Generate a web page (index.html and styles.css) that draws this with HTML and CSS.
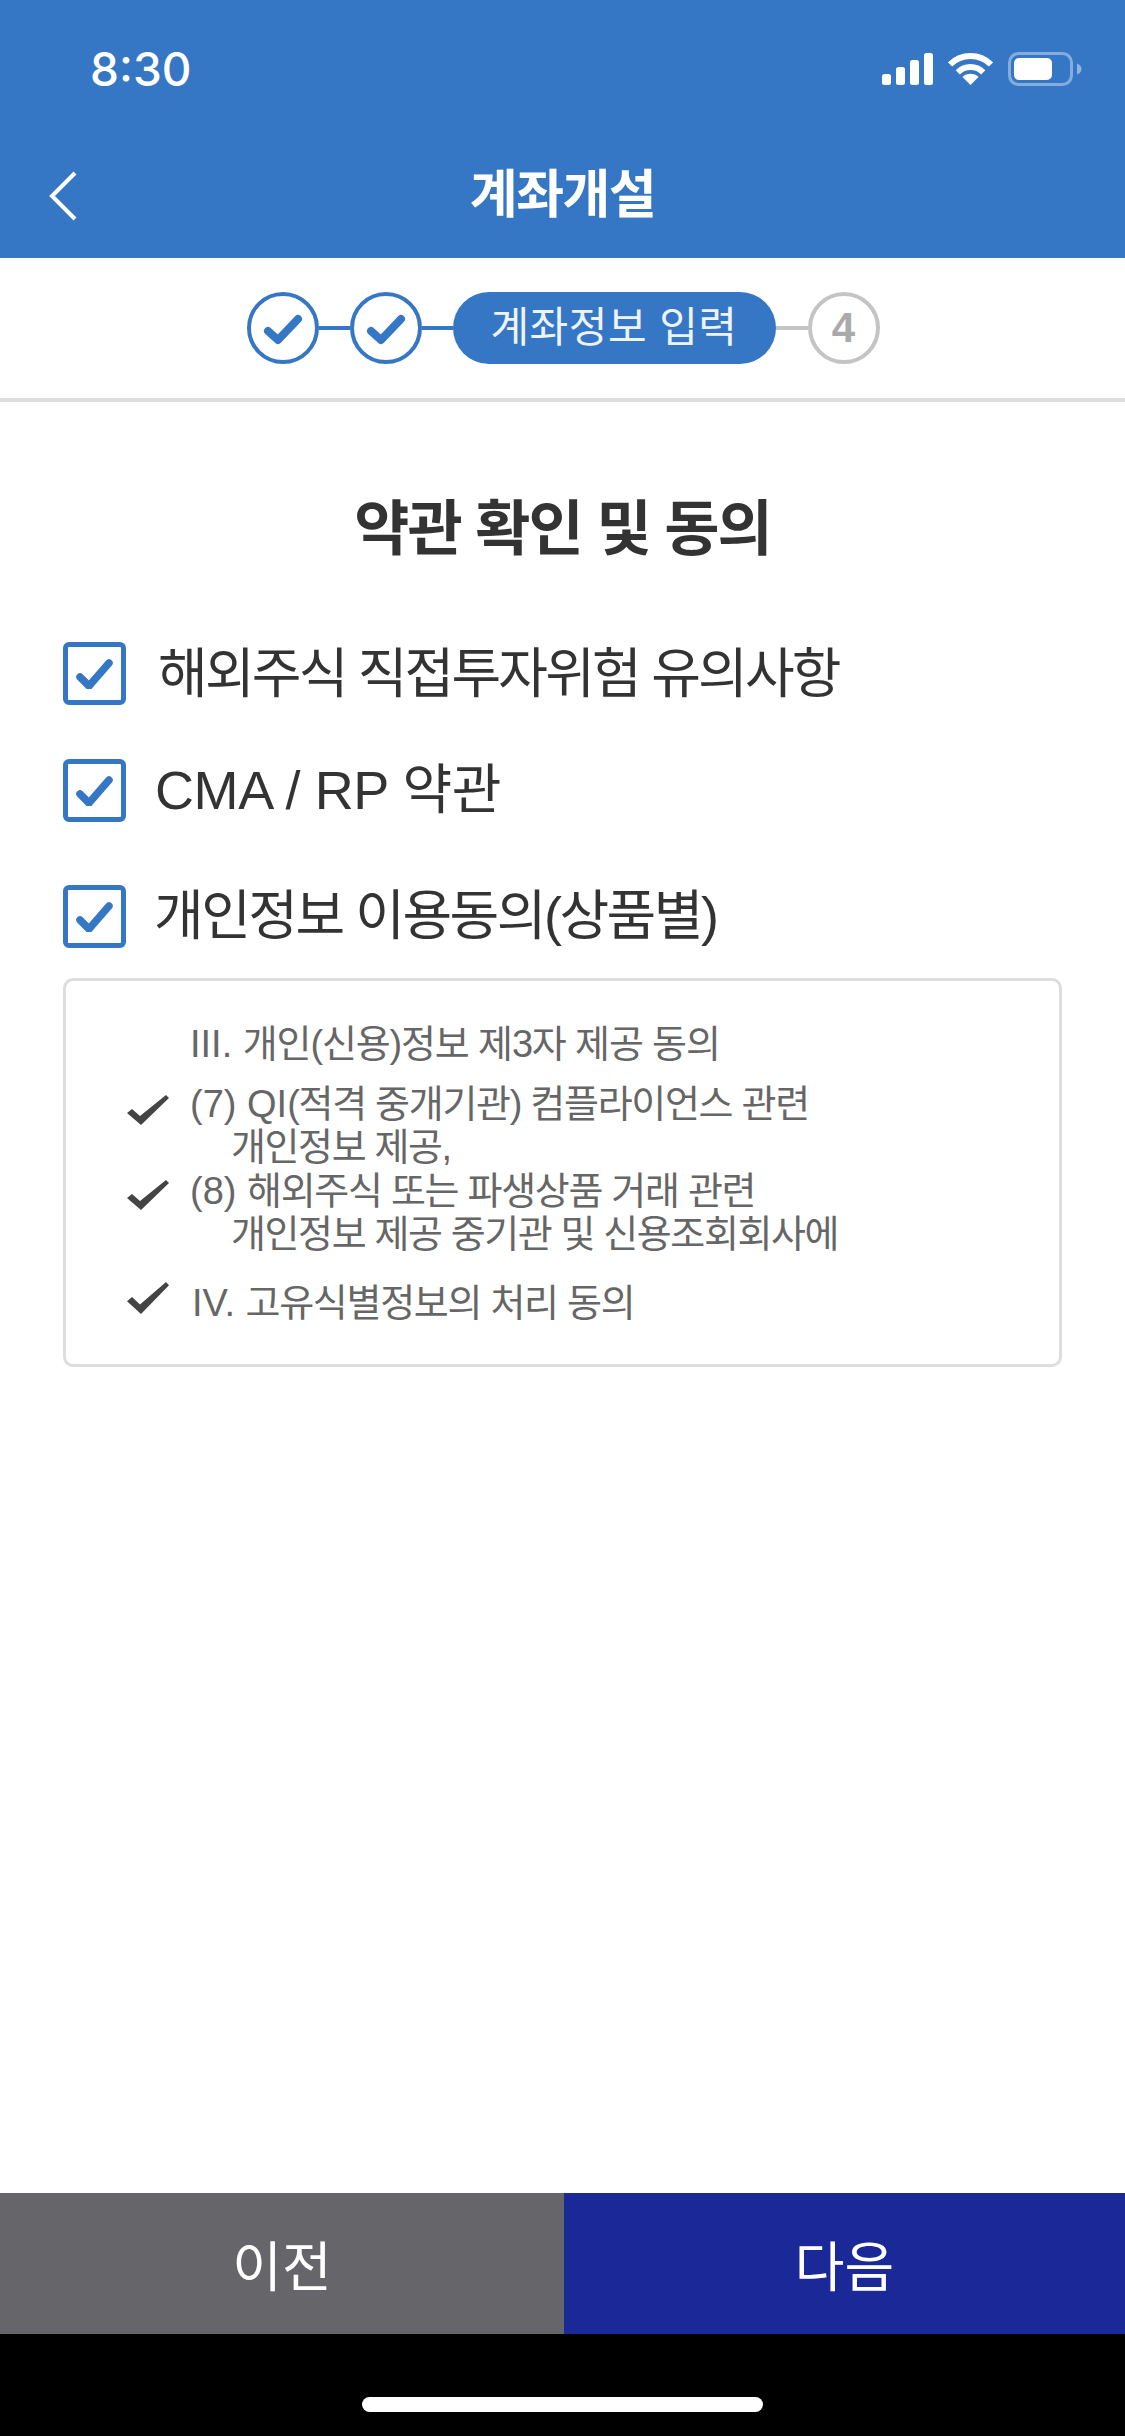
FILE: index.html
```html
<!DOCTYPE html>
<html lang="ko">
<head>
<meta charset="utf-8">
<title>계좌개설</title>
<link rel="stylesheet" href="styles.css">
</head>
<body>
<div class="app">
  <header class="header">
    <div class="status">
      <span class="time">8:30</span>
      <div class="status-icons">
        <svg class="signal" width="51" height="32" viewBox="0 0 51 32"><rect x="0" y="21" width="9" height="11" rx="2.5"/><rect x="14" y="14" width="9" height="18" rx="2.5"/><rect x="28" y="7" width="9" height="25" rx="2.5"/><rect x="42" y="0" width="9" height="32" rx="2.5"/></svg>
        <svg class="wifi" width="45" height="33" viewBox="0 0 45 33"><path d="M2 12.5A29 29 0 0 1 43 12.5" fill="none" stroke="#fff" stroke-width="6"/><path d="M9.8 20.3A18 18 0 0 1 35.2 20.3" fill="none" stroke="#fff" stroke-width="6"/><path d="M22.5 33L14.5 25A11.3 11.3 0 0 1 30.5 25Z" fill="#fff"/></svg>
        <svg class="battery" width="74" height="34" viewBox="0 0 74 34"><rect x="1.5" y="1.5" width="62" height="31" rx="9" fill="none" stroke="#fff" stroke-opacity=".4" stroke-width="3"/><rect x="6" y="6" width="38" height="22" rx="5" fill="#fff"/><path d="M69 11.500C72 12.500 73.500 14.500 73.500 17S72 21.500 69 22.500Z" fill="#fff" fill-opacity=".45"/></svg>
      </div>
    </div>
    <div class="nav">
      <svg class="back" width="29" height="50" viewBox="0 0 29 50"><path d="M26 2L3 25L26 48" fill="none" stroke="#fff" stroke-width="4"/></svg>
      <h1 class="nav-title">계좌개설</h1>
    </div>
  </header>

  <div class="steps">
    <span class="step"><svg width="40" height="34" viewBox="0 0 40 34"><path d="M5 20L15 29L35 8" fill="none" stroke="#3577c5" stroke-width="8" stroke-linecap="round" stroke-linejoin="round"/></svg></span>
    <span class="line"></span>
    <span class="step"><svg width="40" height="34" viewBox="0 0 40 34"><path d="M5 20L15 29L35 8" fill="none" stroke="#3577c5" stroke-width="8" stroke-linecap="round" stroke-linejoin="round"/></svg></span>
    <span class="line"></span>
    <span class="pill">계좌정보 입력</span>
    <span class="line line-off"></span>
    <span class="step step-off">4</span>
  </div>

  <main class="content">
    <h2 class="title">약관 확인 및 동의</h2>
    <div class="agree agree-1">
      <span class="cb"><svg width="37" height="30" viewBox="0 0 37 30"><path d="M4 18L13 27L33 4" fill="none" stroke="#3577c5" stroke-width="7.500" stroke-linecap="round" stroke-linejoin="round"/></svg></span>
      <span class="agree-text agree-text-1">해외주식 직접투자위험 유의사항</span>
    </div>
    <div class="agree agree-2">
      <span class="cb"><svg width="37" height="30" viewBox="0 0 37 30"><path d="M4 18L13 27L33 4" fill="none" stroke="#3577c5" stroke-width="7.500" stroke-linecap="round" stroke-linejoin="round"/></svg></span>
      <span class="agree-text agree-text-2">CMA / RP 약관</span>
    </div>
    <div class="agree agree-3">
      <span class="cb"><svg width="37" height="30" viewBox="0 0 37 30"><path d="M4 18L13 27L33 4" fill="none" stroke="#3577c5" stroke-width="7.500" stroke-linecap="round" stroke-linejoin="round"/></svg></span>
      <span class="agree-text agree-text-3">개인정보 이용동의(상품별)</span>
    </div>
    <div class="detail">
      <div class="item item-head">
        <span class="mark"></span>
        <div><span class="latin">III. </span>개인(신용)정보 제3자 제공 동의</div>
      </div>
      <div class="item">
        <svg class="mark mark-a" width="42" height="30" viewBox="0 0 42 30"><path d="M0 18L5 14L13 21L39 0L42 3L14 30Z" fill="#444"/></svg>
        <div><span class="latin">(7) QI</span>(적격 중개기관) 컴플라이언스 관련<div class="indent">개인정보 제공,</div></div>
      </div>
      <div class="item">
        <svg class="mark mark-b" width="42" height="30" viewBox="0 0 42 30"><path d="M0 18L5 14L13 21L39 0L42 3L14 30Z" fill="#444"/></svg>
        <div><span class="latin">(8) </span>해외주식 또는 파생상품 거래 관련<div class="indent">개인정보 제공 중기관 및 신용조회회사에</div></div>
      </div>
      <div class="item item-last">
        <svg class="mark mark-c" width="42" height="32" viewBox="0 0 42 30" preserveAspectRatio="none"><path d="M0 18L5 14L13 21L39 0L42 3L14 30Z" fill="#444"/></svg>
        <div class="item-iv"><span class="latin">IV. </span>고유식별정보의 처리 동의</div>
      </div>
    </div>
  </main>

  <footer class="footer">
    <div class="actions">
      <button class="btn btn-prev">이전</button>
      <button class="btn btn-next">다음</button>
    </div>
    <div class="home-area"><span class="home"></span></div>
  </footer>
</div>
</body>
</html>
```

FILE: styles.css
```css
* { box-sizing: border-box; }
html, body { margin: 0; padding: 0; background: #fff; }
body { font-family: "Liberation Sans", "Noto Sans CJK KR", sans-serif; color: #333; }

.app { width: 1125px; height: 2436px; display: flex; flex-direction: column; overflow: hidden; }

.header { height: 258px; flex: none; background: #3577c5; color: #fff; display: flex; flex-direction: column; }
.status { height: 138px; flex: none; display: flex; justify-content: space-between; align-items: flex-start; padding: 42px 43px 0 90px; }
.time { font-family: Inter, sans-serif; font-weight: 500; font-size: 46px; line-height: 54px; }
.status-icons { display: flex; gap: 15px; padding-top: 10px; align-items: flex-start; }
.signal { fill: #fff; margin-top: 1px; }

.nav { position: relative; height: 120px; display: flex; justify-content: center; }
.back { position: absolute; left: 49px; top: 33px; }
.nav-title { margin: 0; font-size: 52px; font-weight: 700; line-height: 60px; padding-top: 27px; letter-spacing: -1.500px; }

.steps { height: 140px; flex: none; display: flex; align-items: center; justify-content: center; padding-left: 1px; }
.step { width: 72px; height: 72px; flex: none; border: 4px solid #3577c5; border-radius: 50%; display: flex; align-items: center; justify-content: center; }
.step-off { border-color: #c4c4c4; color: #aaa; font-size: 42px; font-weight: 700; }
.line { width: 31px; height: 4px; flex: none; background: #3577c5; }
.line-off { width: 32px; background: #c4c4c4; }
.pill { width: 323px; height: 72px; flex: none; border-radius: 36px; background: #3577c5; color: #eef3fa; font-size: 42px; line-height: 72px; text-align: center; letter-spacing: .5px; }

.content { flex: 1; border-top: 4px solid #ddd; padding: 0 63px; }
.title { margin: 93px 0 0; font-size: 60px; font-weight: 700; line-height: 70px; text-align: center; color: #333; letter-spacing: -2px; }

.agree { display: flex; align-items: center; height: 63px; gap: 29px; }
.agree-1 { margin-top: 77px; }
.agree-2 { margin-top: 54px; }
.agree-3 { margin-top: 63px; }
.cb { width: 63px; height: 63px; flex: none; border: 5px solid #3577c5; border-radius: 6px; display: flex; align-items: center; justify-content: center; }
.agree-text { font-size: 54px; line-height: 63px; color: #333; letter-spacing: -2.500px; }
.agree-text-1 { margin-left: 3px; padding-top: 2px; letter-spacing: -2.800px; }
.agree-text-2 { letter-spacing: -.4px; }
.agree-text-3 { margin-left: -1px; }

.detail { margin-top: 30px; height: 389px; border: 3px solid #ddd; border-radius: 10px; padding: 42px 0 0 61px; color: #666; font-size: 38px; line-height: 43.500px; letter-spacing: -1.300px; }
.latin { letter-spacing: 0; }
.item { display: flex; gap: 21px; }
.item + .item { margin-top: 16px; }
.item + .item + .item { margin-top: 0; }
.item-last.item-last.item-last { margin-top: 25px; }
.item-head { letter-spacing: -1.150px; }
.mark { width: 42px; flex: none; display: block; }
.mark-a { margin-top: 12px; }
.mark-b { margin-top: 10px; }
.mark-c { margin-top: 0; }
.indent { padding-left: 41px; letter-spacing: -1.400px; }
.item-iv { padding-left: 2px; }

.footer { flex: none; }
.actions { display: flex; height: 141px; }
.btn { border: 0; padding: 0; color: #fff; font: inherit; font-size: 54px; }
.btn-prev { width: 564px; background: #666569; }
.btn-next { flex: 1; background: #1a2898; }
.home-area { height: 102px; background: #000; display: flex; justify-content: center; padding-top: 63px; }
.home { width: 401px; height: 15px; border-radius: 8px; background: #fff; }
```
